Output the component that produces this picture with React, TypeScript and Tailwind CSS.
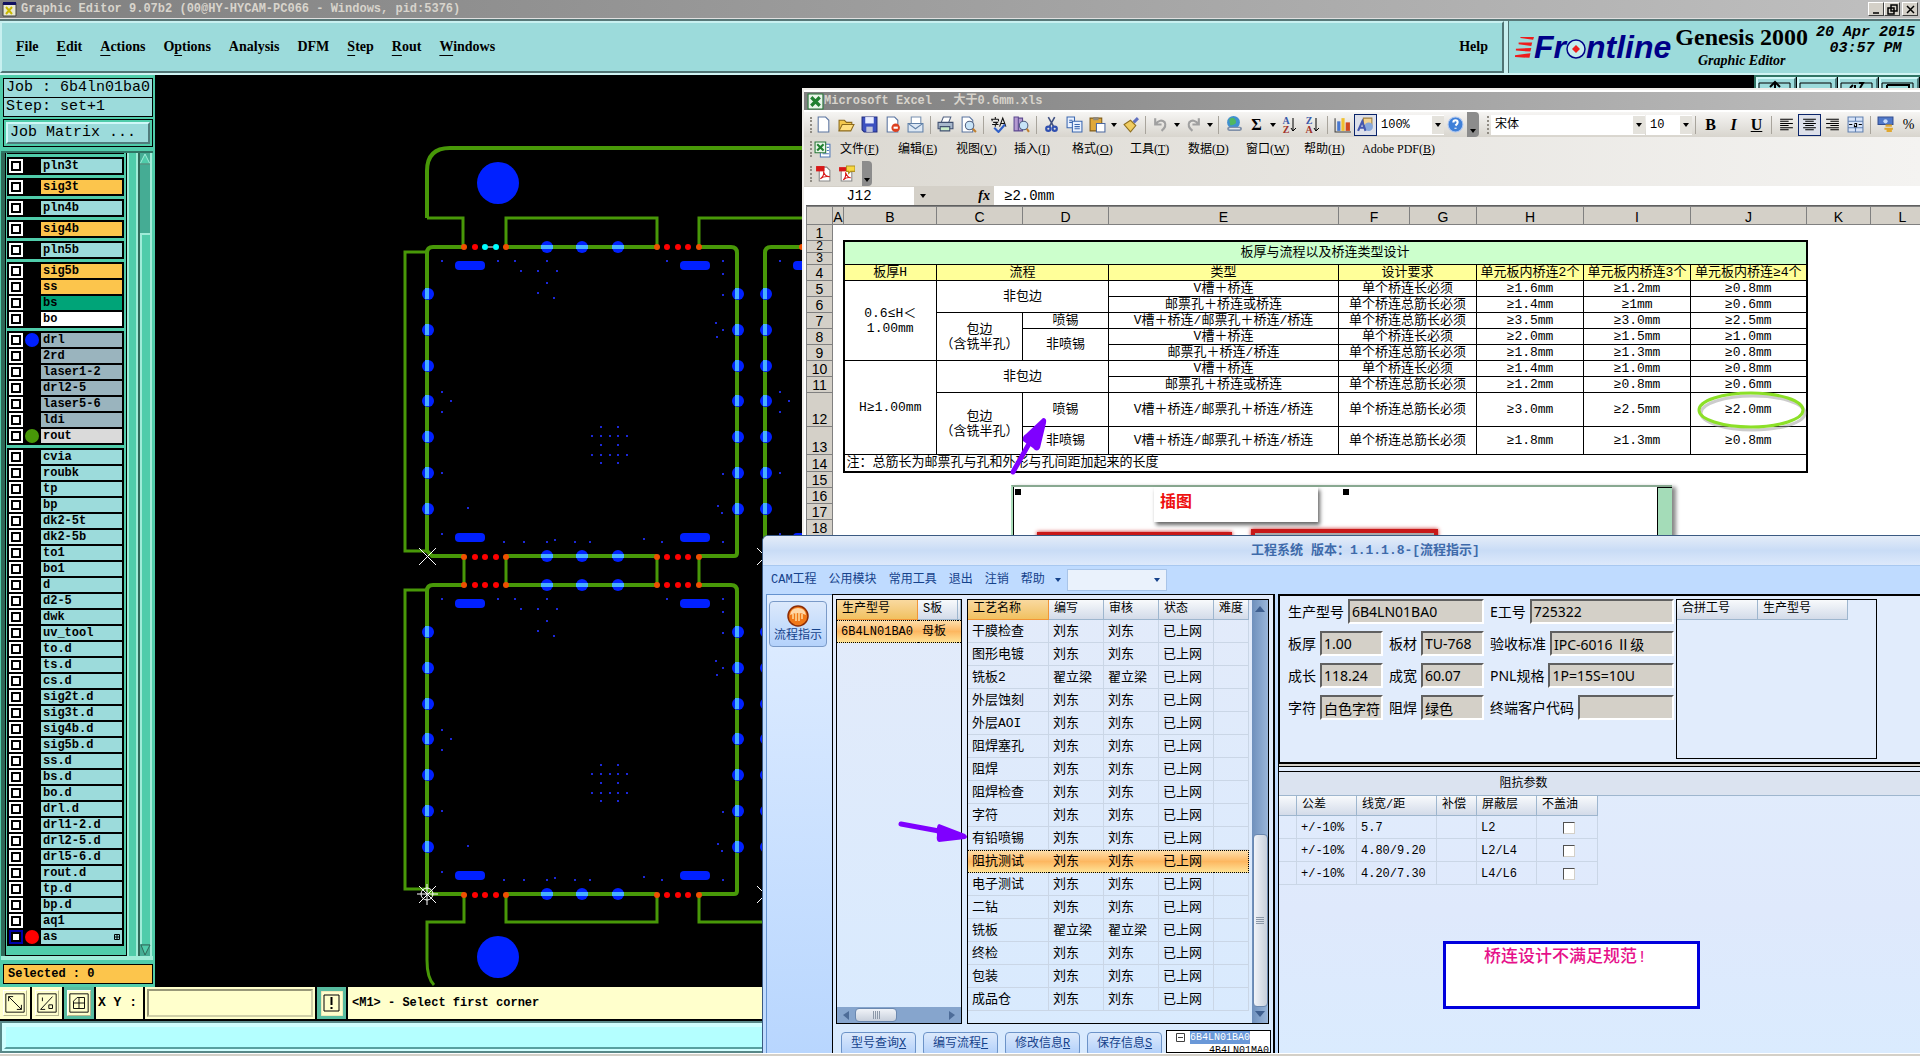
import { Fragment, type ReactNode } from "react";

// ---------- Dados ----------

type Layer = { name: string; bg: string; dot?: string; active?: boolean };

const CYAN = "bg-[#9cdbdb]";
const ORANGE = "bg-[#fcc54c]";
const GRAY = "bg-[#9ab4be]";

const layerGroups: Layer[][] = [
  [{ name: "sig2t", bg: ORANGE }],
  [{ name: "pln3t", bg: CYAN }],
  [{ name: "sig3t", bg: ORANGE }],
  [{ name: "pln4b", bg: CYAN }],
  [{ name: "sig4b", bg: ORANGE }],
  [{ name: "pln5b", bg: CYAN }],
  [
    { name: "sig5b", bg: ORANGE },
    { name: "ss", bg: ORANGE },
    { name: "bs", bg: "bg-[#00a478]" },
    { name: "bo", bg: "bg-white" },
  ],
  [
    { name: "drl", bg: GRAY, dot: "bg-[#0020ff]" },
    { name: "2rd", bg: GRAY },
    { name: "laser1-2", bg: GRAY },
    { name: "drl2-5", bg: GRAY },
    { name: "laser5-6", bg: GRAY },
    { name: "ldi", bg: GRAY },
    { name: "rout", bg: "bg-[#dadada]", dot: "bg-[#489808]" },
  ],
  [
    ..."cvia roubk tp bp dk2-5t dk2-5b to1 bo1 d d2-5 dwk uv_tool to.d ts.d cs.d sig2t.d sig3t.d sig4b.d sig5b.d ss.d bs.d bo.d drl.d drl1-2.d drl2-5.d drl5-6.d rout.d tp.d bp.d aq1"
      .split(" ")
      .map((name) => ({ name, bg: CYAN })),
    { name: "as", bg: CYAN, dot: "bg-[#ff0000]", active: true },
  ],
];

const editorMenu: [string, number][] = [
  ["File", 0],
  ["Edit", 0],
  ["Actions", 0],
  ["Options", 1],
  ["Analysis", -1],
  ["DFM", -1],
  ["Step", 0],
  ["Rout", 0],
  ["Windows", 0],
];

const excelMenu = [
  ["文件", "F"],
  ["编辑", "E"],
  ["视图", "V"],
  ["插入", "I"],
  ["格式", "O"],
  ["工具", "T"],
  ["数据", "D"],
  ["窗口", "W"],
  ["帮助", "H"],
];

const processRows: [string, string][] = [
  ["干膜检查", "刘东"],
  ["图形电镀", "刘东"],
  ["铣板2", "翟立梁"],
  ["外层蚀刻", "刘东"],
  ["外层AOI", "刘东"],
  ["阻焊塞孔", "刘东"],
  ["阻焊", "刘东"],
  ["阻焊检查", "刘东"],
  ["字符", "刘东"],
  ["有铅喷锡", "刘东"],
  ["阻抗测试", "刘东"],
  ["电子测试", "刘东"],
  ["二钻", "刘东"],
  ["铣板", "翟立梁"],
  ["终检", "刘东"],
  ["包装", "刘东"],
  ["成品仓", "刘东"],
];

const impedanceRows = [
  ["+/-10%", "5.7", "L2"],
  ["+/-10%", "4.80/9.20", "L2/L4"],
  ["+/-10%", "4.20/7.30", "L4/L6"],
];

// ---------- PCB ----------

const sideY = [294, 330, 366, 401, 437, 473, 509];
const topX = [547, 582, 618];
const redX = [464, 475, 485, 496, 506, 657, 667, 678, 688, 699];
const breakX = [464, 506, 657, 699];
const vias = [
  [442, 261], [498, 261], [515, 261], [547, 261], [521, 271], [538, 271],
  [557, 271], [547, 283], [538, 293], [554, 298], [667, 261], [723, 261],
  [723, 274], [723, 295], [716, 323], [723, 330], [717, 337], [442, 392],
  [451, 401], [442, 412], [601, 427], [618, 427], [592, 436], [601, 436],
  [610, 436], [618, 436], [627, 436], [601, 445], [618, 445], [592, 455],
  [601, 455], [610, 455], [618, 455], [627, 455], [601, 463], [618, 463],
  [442, 473], [723, 474], [468, 508], [718, 506], [722, 513], [442, 534],
  [504, 542], [524, 542], [547, 542], [555, 540], [575, 542], [590, 542],
  [644, 539], [662, 542], [723, 542],
];

const Board = ({ dx = 0, dy = 0, picked = false }) => (
  <g transform={`translate(${dx} ${dy})`}>
    <path
      d="M464 247H433Q427 247 427 253V551L432 556H464M506 247H657M699 247H731Q737 247 737 253V553Q737 556 734 556H699M506 556H657"
      fill="none"
      stroke="#489808"
      strokeWidth="4"
    />
    {sideY.map((y) =>
      [427, 737].map((x) => (
        <Fragment key={x + "-" + y}>
          <circle cx={x + 1} cy={y} r="6" fill="#0020ff" />
          <rect x={x - 2} y={y - 6} width="4" height="11" fill="#48b0ff" />
        </Fragment>
      ))
    )}
    {topX.map((x) =>
      [247, 556].map((y) => (
        <Fragment key={x + "-" + y}>
          <circle cx={x} cy={y} r="6" fill="#0020ff" />
          <rect x={x - 6} y={y - 2} width="12" height="4" fill="#48b0ff" />
        </Fragment>
      ))
    )}
    {redX.map((x) =>
      [247, 557].map((y) => {
        const isPicked = picked && y === 247 && (x === 485 || x === 496);
        const color = isPicked ? "#00ffff" : breakX.includes(x) ? "#f05000" : "#ff0000";
        return <circle key={x + "-" + y} cx={x} cy={y} r="3" fill={color} />;
      })
    )}
    {picked && <path d="M488 247H493" stroke="#fff" />}
    {[455, 680].map((x) =>
      [261, 533].map((y) => (
        <rect key={x + "-" + y} x={x} y={y} width="30" height="9" rx="4" fill="#0020ff" />
      ))
    )}
    {vias.map(([x, y]) => (
      <rect key={x + "-" + y} x={x - 1} y={y - 1} width="2" height="2" fill="#1c28d8" />
    ))}
  </g>
);

const BoardDrawing = () => (
  <svg width="680" height="912" viewBox="155 75 680 912" className="block shrink-0">
    <g fill="none" stroke="#489808">
      <path strokeWidth="4" d="M427 218V171Q427 148 450 148H835" />
      <path strokeWidth="3" d="M427 218H463V247M506 247V218H657V247M699 247V218H835" />
      <path strokeWidth="3" d="M427 252H405V551H427M427 590H405V889H427" />
      <path strokeWidth="3" d="M464 556V585M506 556V585M657 556V585M699 556V585" />
      <path strokeWidth="3" d="M464 894V922H427V960Q427 978 434 985M506 894V922H657V894M699 894V922H835" />
    </g>
    <circle cx="498" cy="183" r="21" fill="#0020ff" />
    <circle cx="498" cy="957" r="21" fill="#0020ff" />
    <Board picked />
    <Board dy={338} />
    <Board dx={338} />
    <Board dx={338} dy={338} />
    <g stroke="#fff" fill="none">
      <path d="M419 548L436 565M436 548L419 565M757 548L774 565M774 548L757 565" />
      <path d="M419 886L436 903M436 886L419 903M427 884V905M417 894H438M757 886L774 903M774 886L757 903" />
      <circle cx="427" cy="894" r="6" />
    </g>
  </svg>
);

// ---------- Graphic Editor ----------

const FrontlineLogo = () => (
  <div className="flex items-center text-[32px] leading-[32px] font-bold italic text-[#000088] font-[family-name:'Liberation_Sans',sans-serif]">
    <svg width="19" height="26" viewBox="0 0 21 26">
      <path d="M6 2H21L20 5L6 3ZM4 8L19 8L18 12L4 10ZM1 15L18 14L17 18L1 17ZM0 22L17 20L16 25L0 24Z" fill="#ee1c1c" />
    </svg>
    <span>Fr</span>
    <svg width="20" height="24" viewBox="0 0 20 24">
      <circle cx="10" cy="14" r="9" fill="#c4ecec" stroke="#000088" strokeWidth="1.500" />
      <path d="M10 10L14 14L10 18L6 14Z" fill="#ee1c1c" />
    </svg>
    <span>ntline</span>
  </div>
);

const winIcons = ["M2 9H8", "M4 1H10V7H4ZM1 4H7V10H1Z", "M2 2L9 9M9 2L2 9"];

const EditorHeader = () => (
  <>
    <div className="flex h-[19px] shrink-0 items-center gap-1 border-b border-[#e0e0e0] bg-linear-to-r from-[#808080] to-[#c0c0c0] pl-0.5">
      <svg width="15" height="16" viewBox="0 0 15 16">
        <path d="M1 2H14V15H1Z" fill="#e8e8d0" stroke="#404040" />
        <path d="M1 1H14V4H1Z" fill="#101060" />
        <path d="M4 6L10 13M10 6L4 13" stroke="#c8b800" strokeWidth="2" />
      </svg>
      <h1 className="grow text-xs font-bold text-[#d8d4cc]">
        Graphic Editor 9.07b2 (00@HY-HYCAM-PC066 - Windows, pid:5376)
      </h1>
      <div className="flex pr-0.5">
        {winIcons.map((d, index) => (
          <button
            key={index}
            aria-label={["Minimize", "Restore", "Close"][index]}
            className="flex h-3.5 w-4 items-center justify-center border border-t-white border-l-white border-r-[#404040] border-b-[#404040] bg-[#d4d0c8] last:ml-0.5"
          >
            <svg width="11" height="11" viewBox="0 0 11 11" fill="none" stroke="#000" strokeWidth="1.5">
              <path d={d} />
            </svg>
          </button>
        ))}
      </div>
    </div>

    <header className="flex h-14 shrink-0 gap-1 border-y-2 border-t-[#587878] border-b-[#d0f4f4] bg-[#c8f0f0] font-[family-name:'Liberation_Serif',serif]">
      <nav className="flex grow items-center gap-[18px] border-2 border-t-[#c8f0f0] border-l-[#c8f0f0] border-r-[#507474] border-b-[#507474] bg-[#9cdbdb] pr-3.5 pl-3.5 text-sm font-bold">
        {editorMenu.map(([label, key]) => (
          <button key={label}>
            {key < 0 ? (
              label
            ) : (
              <>
                {label.slice(0, key)}
                <span className="underline underline-offset-4">{label[key]}</span>
                {label.slice(key + 1)}
              </>
            )}
          </button>
        ))}
        <button className="ml-auto">Help</button>
      </nav>
      <div className="flex w-[412px] items-center gap-1 border-l border-[#507474] bg-[#9cdbdb] pl-1.5">
        <FrontlineLogo />
        <div className="flex flex-col items-center font-bold">
          <p className="text-2xl leading-7 whitespace-nowrap">Genesis 2000</p>
          <p className="text-sm leading-5 italic">Graphic Editor</p>
        </div>
        <p className="self-start pt-1 pl-1 text-center text-[15px] leading-4 font-bold whitespace-nowrap italic font-[family-name:'Liberation_Mono',monospace]">
          20 Apr 2015
          <br />
          03:57 PM
        </p>
      </div>
    </header>
  </>
);

const LayerRow = ({ layer }: { layer: Layer }) => (
  <label className="flex h-3.5 items-center">
    <input
      type="checkbox"
      className={`size-3.5 shrink-0 appearance-none border-2 bg-white shadow-[inset_0_0_0_2px_#000] ${
        layer.active ? "border-[#0000a8]" : "border-white"
      }`}
    />
    <span className={`mx-0.5 size-3.5 shrink-0 rounded-full ${layer.dot ?? ""}`} />
    <span className={`flex h-3.5 grow items-center justify-between pl-0.5 text-xs leading-3.5 font-bold ${layer.bg}`}>
      {layer.name}
      {layer.active && (
        <svg width="6" height="6" viewBox="0 0 6 6" className="mr-0.5" fill="none" stroke="#000">
          <path d="M.5 .5H5.5V5.5H.5ZM3 0V6M0 3H6" />
        </svg>
      )}
    </span>
  </label>
);

const Sidebar = () => (
  <aside className="flex w-[155px] shrink-0 flex-col bg-[#50ccaa] pt-[3px] pr-0.5 pb-[3px] pl-[3px]">
    <p className="h-5 shrink-0 border border-black bg-[#9cdbdb] pl-0.5 text-[15px] leading-[18px] whitespace-nowrap">
      Job : 6b4ln01ba0
    </p>
    <p className="-mt-px h-5 shrink-0 border border-black bg-[#9cdbdb] pl-0.5 text-[15px] leading-[18px]">
      Step: set+1
    </p>
    <div className="mt-0.5 mb-1 h-7 shrink-0 border border-black p-0.5">
      <button className="block h-full w-full border-2 border-t-[#d0f8f8] border-l-[#d0f8f8] border-r-[#507c7c] border-b-[#507c7c] bg-[#9cdbdb] pl-0.5 text-left text-[15px] leading-[18px]">
        Job Matrix ...
      </button>
    </div>
    <div className="-ml-0.5 flex min-h-0 grow border-t-2 border-b-4 border-t-[#307464] border-b-[#a0ecd8]">
      <div className="w-1 bg-[#306858]" />
      <div className="flex w-[122px] flex-col justify-end gap-[3px] overflow-hidden border-x border-b border-black pr-0.5 pb-[9px] pl-px">
        {layerGroups.map((group, index) => (
          <div key={index} className="flex shrink-0 flex-col gap-0.5 bg-black p-0.5">
            {group.map((layer) => (
              <LayerRow key={layer.name} layer={layer} />
            ))}
          </div>
        ))}
      </div>
      <div className="w-[11px] border-x-2 border-x-[#a0ecd8]" />
      <div className="flex w-[14px] flex-col border-x-2 border-l-[#306858] border-r-[#a0ecd8] bg-[#45ac94]">
        <svg width="11" height="12" viewBox="0 0 11 12" className="shrink-0">
          <path d="M5 1L10 11H0Z" fill="#50ccaa" stroke="#a0ecd8" />
          <path d="M10 11H0" stroke="#306858" />
        </svg>
        <div className="mt-[68px] grow border-t-2 border-l-2 border-[#a0ecd8] bg-[#50ccaa]" />
        <svg width="11" height="12" viewBox="0 0 11 12" className="shrink-0">
          <path d="M1 1H10L5 11Z" fill="#50ccaa" stroke="#306858" />
        </svg>
      </div>
    </div>
    <p className="mt-1 h-5 shrink-0 border border-black bg-[#fcc54c] pl-1 text-xs leading-[18px] font-bold">
      Selected : 0
    </p>
  </aside>
);

const viewTools = [
  "M12 7L17 2L22 7M17 2V12",
  "",
  "M10 8L13 5M15 9V5M19 3L23 3L20 8",
  "M6 5H28V12M6 5V12",
];

const modeIcons = [
  { label: "Snap", d: "M3 3L17 17M3 8V3H8M17 12V17H12" },
  { label: "Angle", d: "M3 17L16 3M3 17H8M5 4V8M12 12H16V16H12Z" },
  { label: "Grid", d: "M4 8L8 4H16V16H4ZM4 10H16M10 4V16" },
];

const EditorFooter = () => (
  <>
    <div className="flex h-[34px] shrink-0 items-stretch border-b-2 border-black bg-[#ffffcc] text-xs font-bold">
      {modeIcons.map((icon, index) => (
        <button
          key={icon.label}
          aria-label={icon.label}
          className={`flex w-8 items-center justify-center border-r-2 border-black ${index === 2 ? "bg-[#58bca0]" : ""}`}
        >
          <svg
            width="24"
            height="26"
            viewBox="-2 -3 24 26"
            fill="none"
            stroke="#000"
            className="border border-t-white border-l-white border-r-[#b8b890] border-b-[#b8b890] bg-[#ffffcc]"
          >
            <path d="M0 0H20V20H0Z" />
            <path d={icon.d} />
          </svg>
        </button>
      ))}
      <label htmlFor="xy" className="flex w-[47px] items-center pl-0.5 text-[13px] whitespace-nowrap">
        X Y :
      </label>
      <div className="flex w-[174px] border-x-2 border-black p-0.5">
        <input id="xy" className="w-full border-2 border-t-[#989878] border-l-[#989878] border-r-[#d0d0a8] border-b-[#d0d0a8] px-1 outline-none" />
      </div>
      <button className="flex w-[31px] items-center justify-center border-r-2 border-black bg-[#58bca0]" aria-label="Alert">
        <svg width="22" height="25" viewBox="0 0 22 25" fill="none" stroke="#000">
          <path d="M0 0H22V25H0Z" fill="#ffffcc" stroke="#ddd8a8" />
          <path d="M3 4H18V20H3Z" />
          <path d="M10.500 6V14M10.500 16V18" strokeWidth="2" />
        </svg>
      </button>
      <p className="self-center pl-1">&lt;M1&gt; - Select first corner</p>
    </div>
    <div className="h-8 shrink-0 border-2 border-[#588888] bg-[#d0ffff] p-0.5">
      <div className="h-full border-2 border-t-[#d0ffff] border-l-[#d0ffff] border-r-[#58a0a0] border-b-[#58a0a0] bg-[#b4ffff]" />
    </div>
    <div className="h-[3px] shrink-0 border-t border-white bg-[#d4d0c8]" />
  </>
);

// ---------- Excel ----------

const icons: Record<string, ReactNode> = {
  new: <path d="M3 1H10L13 4V15H3Z" fill="#fff" stroke="#5a74a0" />,
  open: (
    <>
      <path d="M1 14V4H6L8 6H13V8" fill="#f4c84c" stroke="#8c6a1c" />
      <path d="M1 14L4 8H15L12 14Z" fill="#ffdf80" stroke="#8c6a1c" />
    </>
  ),
  save: (
    <>
      <path d="M1 1H15V15H3L1 13Z" fill="#3c50c0" stroke="#202c80" />
      <path d="M4 1H12V7H4Z" fill="#e8ecff" />
      <path d="M5 10H11V15H5Z" fill="#c0c4d8" />
    </>
  ),
  permission: (
    <>
      <path d="M3 1H10L13 4V15H3Z" fill="#fff" stroke="#5a74a0" />
      <circle cx="11" cy="11" r="4" fill="#dc4020" />
      <path d="M9 11H13" stroke="#fff" strokeWidth="2" />
    </>
  ),
  mail: (
    <>
      <path d="M4 1H13V7H4Z" fill="#fff" stroke="#7890b0" />
      <path d="M1 7H15V15H1Z" fill="#dde8f4" stroke="#6080a8" />
      <path d="M1 7L8 12L15 7" fill="none" stroke="#6080a8" />
    </>
  ),
  print: (
    <>
      <path d="M4 6L6 1H13L11 6" fill="#fff" stroke="#506080" />
      <path d="M1 6H15V12H1Z" fill="#a8b8cc" stroke="#405070" />
      <path d="M3 10H12V14H3Z" fill="#c8ecc8" stroke="#405070" />
    </>
  ),
  preview: (
    <>
      <path d="M2 1H9L12 4V15H2Z" fill="#fff" stroke="#5a74a0" />
      <circle cx="9" cy="9" r="4" fill="#c8e4f8" stroke="#506080" />
      <path d="M12 12L15 15" stroke="#c08030" strokeWidth="2" />
    </>
  ),
  spell: (
    <>
      <path d="M1 3H8M2 3V5M8 3V5M5 1V3M3 6H7L5 8V10M2 8H8M9 10L12 2L15 10M10 7H14" stroke="#111" fill="none" />
      <path d="M4 11L8 15L14 8" stroke="#3060c8" strokeWidth="2" fill="none" />
    </>
  ),
  research: (
    <>
      <path d="M1 1H5V14H1ZM5 2H9V14H5Z" fill="#b49ad0" stroke="#5c4890" />
      <circle cx="10" cy="9" r="4" fill="#c8e4f8" stroke="#506080" />
      <path d="M13 12L15 15" stroke="#c08030" strokeWidth="2" />
    </>
  ),
  cut: (
    <>
      <path d="M5 1L10 10M11 1L6 10" stroke="#405080" fill="none" strokeWidth="1.500" />
      <circle cx="5" cy="12" r="2" fill="none" stroke="#3050b0" strokeWidth="2" />
      <circle cx="11" cy="12" r="2" fill="none" stroke="#3050b0" strokeWidth="2" />
    </>
  ),
  copy: (
    <>
      <path d="M1 1H8V11H1ZM3 4H6M3 6H6" fill="#eaf2ff" stroke="#3c68b0" />
      <path d="M6 5H15V15H6ZM8 8H13M8 10H13M8 12H13" fill="#eaf2ff" stroke="#3c68b0" />
    </>
  ),
  paste: (
    <>
      <path d="M1 2H12V14H1Z" fill="#e0a838" stroke="#805c18" />
      <path d="M4 1H9V4H4Z" fill="#908878" />
      <path d="M7 7H15V15H7Z" fill="#fff" stroke="#4c68a0" />
    </>
  ),
  brush: (
    <>
      <path d="M10 5L14 1L16 3L12 7Z" fill="#6070c0" />
      <path d="M2 8L8 4L13 9L8 15Z" fill="#f0cc60" stroke="#907020" />
    </>
  ),
  undo: <path d="M3 2V8H9M3 8Q8 2 12 6Q14 10 9 14" fill="none" stroke="#a0a0a0" strokeWidth="2" />,
  redo: <path d="M13 2V8H7M13 8Q8 2 4 6Q2 10 7 14" fill="none" stroke="#a0a0a0" strokeWidth="2" />,
  link: (
    <>
      <circle cx="8" cy="6" r="6" fill="#4090d0" />
      <path d="M4 3Q8 0 10 4T5 9Z" fill="#50b860" />
      <path d="M4 12H9M8 12H14" stroke="#8090a8" strokeWidth="4" strokeLinecap="round" />
      <path d="M4 12H14" stroke="#fff" />
    </>
  ),
  chart: (
    <>
      <path d="M1 2V15H16" stroke="#404040" fill="none" />
      <path d="M3 5H6V14H3Z" fill="#4878d0" />
      <path d="M7 2H10V14H7Z" fill="#f0c030" />
      <path d="M11 6H15V14H11Z" fill="#d04820" />
    </>
  ),
  shapes: (
    <>
      <path d="M6 2H14V9H6Z" fill="#f4d490" stroke="#a08040" />
      <circle cx="11" cy="10" r="4" fill="#88a8dc" />
      <path d="M1 14L5 5L8 14M3 11H7" fill="none" stroke="#4458b0" strokeWidth="2" />
    </>
  ),
  help: (
    <>
      <circle cx="8" cy="8" r="7" fill="#4080d8" stroke="#b0c8f0" />
      <path d="M6 6Q6 4 8 4T10 6Q10 7 8 9M8 11V12" stroke="#fff" fill="none" strokeWidth="2" />
    </>
  ),
  left: <path d="M2 3H14M2 5H10M2 7H14M2 9H10M2 11H14M2 13H10" stroke="#000" />,
  center: <path d="M2 3H14M4 5H12M2 7H14M4 9H12M2 11H14M4 13H12" stroke="#000" />,
  right: <path d="M2 3H14M6 5H14M2 7H14M6 9H14M2 11H14M6 13H14" stroke="#000" />,
  merge: (
    <>
      <path d="M1 1H15V15H1ZM1 5H15M1 11H15M8 1V5M8 11V15" fill="#d8e4f8" stroke="#6080b0" />
      <path d="M2 8H5M14 8H11M7 7H9V10H7V8" stroke="#000" fill="none" />
    </>
  ),
  currency: (
    <>
      <path d="M1 1H15V8H1Z" fill="#5078c8" stroke="#304c90" />
      <circle cx="8" cy="5" r="2" fill="#c8dcf8" />
      <path d="M8 9H14M7 12H15M9 14H14" stroke="#e0a830" strokeWidth="2" />
    </>
  ),
  excel: (
    <>
      <path d="M1 1H15V15H1Z" fill="#eaf6ea" stroke="#287838" />
      <path d="M4 4L12 12M12 4L4 12" stroke="#208030" strokeWidth="3" />
    </>
  ),
  workbook: (
    <>
      <path d="M6 3H15V15H6ZM12 6H14M12 9H14M8 12H14" fill="#fff" stroke="#5078b8" />
      <path d="M1 1H11V11H1Z" fill="#eaf6ea" stroke="#287838" />
      <path d="M3 3L9 9M9 3L3 9" stroke="#208030" strokeWidth="2" />
    </>
  ),
  pdf: (
    <>
      <path d="M4 2H11L14 5V15H4Z" fill="#fff" stroke="#888" />
      <path d="M1 1H9V6H1Z" fill="#d81818" />
      <path d="M5 13Q9 10 8 6Q9 11 14 11Q8 10 5 13Z" stroke="#d81818" fill="none" />
    </>
  ),
  pdfMail: (
    <>
      <path d="M3 4H10L13 7V15H3Z" fill="#fff" stroke="#888" />
      <path d="M1 2H8V6H1Z" fill="#d81818" />
      <path d="M5 14Q8 11 7 7Q9 12 12 12Q8 11 5 14Z" stroke="#d81818" fill="none" />
      <path d="M8 1H16V6H12L10 8V6H8Z" fill="#f8d840" stroke="#b09020" />
    </>
  ),
};

const Icon = ({ name }: { name: string }) => (
  <svg width="17" height="17" viewBox="0 0 16 16" className="shrink-0">
    {icons[name]}
  </svg>
);

const Caret = () => (
  <svg width="10" height="4" viewBox="0 0 10 4" className="shrink-0">
    <path d="M2 0H8L5 4Z" fill="currentColor" />
  </svg>
);

const Sep = () => <span className="mx-[3px] h-[18px] w-px shrink-0 bg-[#a8a49c]" />;

const Grip = () => <span className="h-4 w-0.5 shrink-0 border-l-2 border-dotted border-[#908c84]" />;

const Tool = ({ name, label, on = false, children }: { name?: string; label: string; on?: boolean; children?: ReactNode }) => (
  <button
    aria-label={label}
    className={`flex h-[22px] w-[23px] shrink-0 items-center justify-center text-base leading-5 font-bold font-[family-name:'Liberation_Serif',serif] ${
      on ? "border border-[#0a246a] bg-[#dde0ea]" : ""
    }`}
  >
    {name ? <Icon name={name} /> : children}
  </button>
);

const Combo = ({ label, value, width }: { label: string; value: string; width: string }) => (
  <div className={`flex h-5 shrink-0 items-center bg-white ${width}`}>
    <select aria-label={label} className="h-5 min-w-0 grow appearance-none bg-transparent pl-1 text-xs outline-none">
      <option>{value}</option>
    </select>
    <span className="flex h-[18px] w-3 items-center justify-center bg-[#e4e2dc]">
      <Caret />
    </span>
  </div>
);

const SortIcon = ({ a, b }: { a: string; b: string }) => (
  <span className="flex items-center">
    <span className="flex flex-col text-[10px] leading-[9px]">
      <span className="text-[#3858a8]">{a}</span>
      <span className="text-[#a03028]">{b}</span>
    </span>
    <svg width="7" height="14" viewBox="0 0 7 14" fill="none" stroke="#000">
      <path d="M3 0V13M1 10L3 13L6 10" />
    </svg>
  </span>
);

const ExcelToolbars = () => (
  <>
    <div className="mt-0.5 flex h-[25px] items-center bg-linear-to-b from-[#f6f5f3] to-[#d8d5ce] pl-1.5">
      <Grip />
      <Tool name="new" label="新建" />
      <Tool name="open" label="打开" />
      <Tool name="save" label="保存" />
      <Tool name="permission" label="权限" />
      <Tool name="mail" label="邮件" />
      <Sep />
      <Tool name="print" label="打印" />
      <Tool name="preview" label="打印预览" />
      <Sep />
      <Tool name="spell" label="拼写检查" />
      <Tool name="research" label="信息检索" />
      <Sep />
      <Tool name="cut" label="剪切" />
      <Tool name="copy" label="复制" />
      <Tool name="paste" label="粘贴" />
      <Caret />
      <Tool name="brush" label="格式刷" />
      <Sep />
      <Tool name="undo" label="撤消" />
      <Caret />
      <Tool name="redo" label="恢复" />
      <Caret />
      <Sep />
      <Tool name="link" label="超链接" />
      <Tool label="自动求和">Σ</Tool>
      <Caret />
      <Tool label="升序">
        <SortIcon a="A" b="Z" />
      </Tool>
      <Tool label="降序">
        <SortIcon a="Z" b="A" />
      </Tool>
      <Sep />
      <Tool name="chart" label="图表" />
      <Tool name="shapes" label="绘图" on />
      <Combo label="显示比例" value="100%" width="w-[67px]" />
      <Tool name="help" label="帮助" />
      <span className="flex h-[25px] w-3 shrink-0 items-end justify-center rounded-r bg-[#8c8c8c] pb-1">
        <Caret />
      </span>
      <span className="mr-0.5 ml-2">
        <Grip />
      </span>
      <Combo label="字体" value="宋体" width="w-[154px]" />
      <span className="w-0.5" />
      <Combo label="字号" value="10" width="w-[46px]" />
      <Sep />
      <Tool label="加粗">B</Tool>
      <Tool label="倾斜">
        <i>I</i>
      </Tool>
      <Tool label="下划线">
        <u>U</u>
      </Tool>
      <Sep />
      <Tool name="left" label="左对齐" />
      <Tool name="center" label="居中" on />
      <Tool name="right" label="右对齐" />
      <Tool name="merge" label="合并及居中" />
      <Sep />
      <Tool name="currency" label="货币样式" />
      <Tool label="百分比样式">
        <span className="text-sm font-normal">%</span>
      </Tool>
    </div>
    <div className="flex h-6 items-center bg-linear-to-r from-[#dcd9d2] to-[#f4f3f1] pl-1.5 text-xs font-[family-name:'Liberation_Serif','Noto_Sans_CJK_SC',serif]">
      <Grip />
      <span className="w-7 pl-0.5">
        <Icon name="workbook" />
      </span>
      {excelMenu.map(([label, key]) => (
        <button key={label} className="w-[58px] shrink-0 text-left">
          {label}(<u>{key}</u>)
        </button>
      ))}
      <button className="shrink-0">
        Adobe PDF(<u>B</u>)
      </button>
    </div>
    <div className="flex h-[25px] items-center bg-linear-to-r from-[#dcd9d2] to-[#f4f3f1] pl-1.5">
      <Grip />
      <Tool name="pdf" label="转换为 PDF" />
      <Tool name="pdfMail" label="PDF 并审阅" />
      <span className="ml-1 flex h-[25px] w-2.5 items-end justify-center rounded-r bg-[#8c8c8c] pb-1">
        <Caret />
      </span>
    </div>
    <div className="flex h-[19px] items-center bg-[#d4d0c8] text-sm">
      <input aria-label="名称框" defaultValue="J12" className="h-[18px] w-[110px] bg-white text-center outline-none" />
      <span className="w-6 pl-1">
        <Caret />
      </span>
      <span className="w-14 pr-1 text-right text-sm font-bold italic font-[family-name:'Liberation_Serif',serif]">fx</span>
      <input aria-label="编辑栏" defaultValue="≥2.0mm" className="h-[19px] min-w-0 grow bg-white pl-2.5 outline-none" />
    </div>
  </>
);

type Cell = { t: ReactNode; c?: number; r?: number; cls?: string };

const Req = ["单个桥连长必须", "单个桥连总筋长必须"];
const V = "V槽＋桥连";
const MIX = "V槽＋桥连/邮票孔＋桥连/桥连";
const wrapCell = (
  <>
    包边
    <br />
    （含铣半孔）
  </>
);

const tail = (type: string, req: number, ...values: string[]): Cell[] => [
  { t: type },
  { t: Req[req], c: 2 },
  ...values.map((v) => ({ t: "≥" + v + "mm" })),
];

const sheetRows: { n: number; h: string; cells: Cell[] }[] = [
  { n: 2, h: "h-3", cells: [{ t: "板厚与流程以及桥连类型设计", c: 9, r: 2, cls: "bg-[#ccffcc] border-t-2" }] },
  { n: 3, h: "h-3", cells: [] },
  {
    n: 4,
    h: "h-4",
    cells: [
      { t: "板厚H" },
      { t: "流程", c: 2 },
      { t: "类型" },
      { t: "设计要求", c: 2 },
      { t: "单元板内桥连2个" },
      { t: "单元板内桥连3个" },
      { t: "单元板内桥连≥4个" },
    ].map((cell) => ({ ...cell, cls: "bg-[#ffff99]" })),
  },
  {
    n: 5,
    h: "h-4",
    cells: [
      { t: <>0.6≤H＜<br />1.00mm</>, r: 5 },
      { t: "非包边", c: 2, r: 2 },
      ...tail(V, 0, "1.6", "1.2", "0.8"),
    ],
  },
  { n: 6, h: "h-4", cells: tail("邮票孔＋桥连或桥连", 1, "1.4", "1", "0.6") },
  { n: 7, h: "h-4", cells: [{ t: wrapCell, r: 3 }, { t: "喷锡" }, ...tail(MIX, 1, "3.5", "3.0", "2.5")] },
  { n: 8, h: "h-4", cells: [{ t: "非喷锡", r: 2 }, ...tail(V, 0, "2.0", "1.5", "1.0")] },
  { n: 9, h: "h-4", cells: tail("邮票孔＋桥连/桥连", 1, "1.8", "1.3", "0.8") },
  {
    n: 10,
    h: "h-4",
    cells: [{ t: "H≥1.00mm", r: 4 }, { t: "非包边", c: 2, r: 2 }, ...tail(V, 0, "1.4", "1.0", "0.8")],
  },
  { n: 11, h: "h-4", cells: tail("邮票孔＋桥连或桥连", 1, "1.2", "0.8", "0.6") },
  { n: 12, h: "h-[34px]", cells: [{ t: wrapCell, r: 2 }, { t: "喷锡" }, ...tail(MIX, 1, "3.0", "2.5", "2.0")] },
  { n: 13, h: "h-7", cells: [{ t: "非喷锡" }, ...tail(MIX, 1, "1.8", "1.3", "0.8")] },
  {
    n: 14,
    h: "h-[17px]",
    cells: [{ t: "注：总筋长为邮票孔与孔和外形与孔间距加起来的长度", c: 9, cls: "text-left pl-0.5 border-b-2" }],
  },
];

const colWidths = [26, 11, 93, 86, 86, 230, 71, 67, 107, 107, 116, 64, 64];
const rowHead = "border border-[#808080] bg-[#d4d0c8] p-0 text-center align-bottom text-sm leading-3.5 font-normal font-[family-name:'Liberation_Sans',sans-serif]";

const Sheet = () => (
  <div className="relative ml-0.5 border-t border-[#606060] bg-white">
    <table className="w-[1128px] table-fixed border-collapse text-[13px] leading-[15px]">
      <colgroup>
        {colWidths.map((width, index) => (
          <col key={index} style={{ width }} />
        ))}
      </colgroup>
      <thead>
        <tr className="h-[18px]">
          {["", ..."ABCDEFGHIJKL"].map((letter) => (
            <th key={letter} className={rowHead}>
              {letter}
            </th>
          ))}
        </tr>
      </thead>
      <tbody>
        <tr className="h-4">
          <th className={rowHead}>1</th>
        </tr>
        {sheetRows.map((row) => (
          <tr key={row.n} className={row.h}>
            <th className={rowHead}>
              <span className={row.n < 4 ? "block text-xs leading-[11px]" : ""}>{row.n}</span>
            </th>
            {row.n !== 3 && <td className="border-r-2 border-black p-0" rowSpan={row.n === 2 ? 2 : 1} />}
            {row.cells.map((cell, index) => (
              <td
                key={index}
                colSpan={cell.c}
                rowSpan={cell.r}
                className={`border border-black p-0 text-center whitespace-nowrap ${cell.cls ?? ""}`}
              >
                {cell.t}
              </td>
            ))}
            {row.n !== 3 && <td className="border-l-2 border-black p-0" rowSpan={row.n === 2 ? 2 : 1} />}
          </tr>
        ))}
        {[15, 16, 17, 18].map((n) => (
          <tr key={n} className="h-4">
            <th className={rowHead}>{n}</th>
          </tr>
        ))}
      </tbody>
    </table>

    {/* Objetos soltos sobre a planilha */}
    <div className="absolute top-[279px] left-[205px] h-16 w-[661px] border-t-2 border-l-2 border-t-[#88a890] border-l-[#a8dcb8] bg-white shadow-[4px_2px_4px_#888]">
      <div className="absolute top-0 left-0 h-16 w-px bg-black" />
      <div className="absolute top-0.5 left-0.5 size-1.5 bg-black" />
      <div className="absolute top-0.5 left-[330px] size-1.5 bg-black" />
      <div className="absolute top-0 right-0 h-16 w-[15px] border-t border-l border-black bg-[#a4dcb8]" />
      <div className="absolute top-[45px] left-6 h-8 w-[195px] border-4 border-[#c81818] shadow-[0_0_4px_#c81818]" />
      <div className="absolute top-[42px] left-[238px] h-8 w-[187px] border-4 border-[#c81818] bg-[#aaa] shadow-[0_0_4px_#c81818]" />
      <p className="absolute top-0 left-[141px] h-[35px] w-[164px] bg-white pl-1.5 text-base leading-8 font-bold text-[#ee1010] shadow-[2px_3px_4px_#666]">
        插图
      </p>
    </div>
    <svg width="38" height="60" viewBox="0 0 38 60" className="absolute top-[209px] left-[204px]" fill="#7f00ff">
      <path d="M3 57L20 27" stroke="#7f00ff" strokeWidth="5" strokeLinecap="round" />
      <path d="M33 3Q37 3 36 8L30 33Q27 38 23 33L13 26Q12 21 16 19Z" />
    </svg>
    <svg width="116" height="46" viewBox="0 0 116 46" className="absolute top-[181px] left-[887px]">
      <ellipse cx="60" cy="26" rx="52" ry="17" fill="none" stroke="#999" strokeWidth="3" opacity="0.5" />
      <ellipse cx="58" cy="23" rx="52" ry="17" fill="none" stroke="#8ce028" strokeWidth="3" />
    </svg>
  </div>
);

const ExcelWindow = () => (
  <section className="absolute top-[88px] right-0 bottom-0 left-[802px] overflow-hidden border-t-2 border-l-2 border-t-[#f0eeea] border-l-[#f0eeea] bg-white pt-0.5">
    <div className="flex h-[18px] items-center bg-linear-to-r from-[#808080] to-[#c0c0c0] pl-[3px] text-xs font-bold text-[#d8d4cc]">
      <Icon name="excel" />
      <h2 className="whitespace-nowrap">Microsoft Excel - 大于0.6mm.xls</h2>
    </div>
    <ExcelToolbars />
    <Sheet />
  </section>
);

// ---------- 工程系统 ----------

const headCell =
  "h-5 border-r border-b border-[#9eb6ce] bg-linear-to-b from-[#f8fafc] to-[#d3dbe9] p-0 pl-[5px] text-left text-xs leading-[19px] font-normal whitespace-nowrap overflow-hidden";
const headCellHot = "h-5 border-r border-b border-[#f29536] bg-linear-to-b from-[#f9d99f] to-[#f1c15f] p-0 pl-[5px] text-left text-xs leading-[19px] font-normal";
const bodyCell = "h-[23px] border-r border-b border-[#cad6e6] p-0 pt-0.5 pl-1 overflow-hidden whitespace-nowrap";
const hotRow = "bg-linear-to-b from-[#fde0ae] via-[#fdb760] to-[#fee69a]";
const hotCell = "h-[23px] border-y border-dotted border-black p-0 pl-1 overflow-hidden";
const sunken = "min-w-0 h-[25px] border-2 border-t-[#606060] border-l-[#606060] border-r-white border-b-white bg-[#d4d0c8] pl-0.5 outline-none";

const PartList = () => (
  <div className="flex w-[126px] shrink-0 flex-col overflow-hidden border border-black">
    <table className="w-[124px] table-fixed border-separate border-spacing-0 text-xs leading-4">
      <thead>
        <tr>
          <th className={`w-[81px] ${headCellHot}`}>生产型号</th>
          <th className={`w-10 ${headCell}`}>S板</th>
          <th className={headCell} />
        </tr>
      </thead>
      <tbody>
        <tr className={hotRow}>
          <td className={hotCell}>6B4LN01BA0</td>
          <td className={hotCell}>母板</td>
          <td className={hotCell} />
        </tr>
      </tbody>
    </table>
    <div className="mt-auto flex h-4 items-center justify-between bg-[#86a5cd] px-1.5 text-[#4d6c98]">
      <svg width="6" height="9" viewBox="0 0 6 9">
        <path d="M6 0V9L0 4Z" fill="currentColor" />
      </svg>
      <span className="mr-auto ml-1.5 flex h-3.5 w-[42px] items-center justify-center gap-px rounded-sm border border-[#6a88b0] bg-linear-to-b from-[#f0f3f8] to-[#c8d0dc]">
        {[0, 1, 2, 3].map((n) => (
          <i key={n} className="h-2 w-px bg-[#8c98a8]" />
        ))}
      </span>
      <svg width="6" height="9" viewBox="0 0 6 9">
        <path d="M0 0V9L6 4Z" fill="currentColor" />
      </svg>
    </div>
  </div>
);

const ProcessList = () => (
  <div className="flex w-[302px] shrink-0 justify-between overflow-hidden border border-black">
    <table className="w-[281px] table-fixed self-start border-separate border-spacing-0 text-[13px] leading-4">
      <thead>
        <tr>
          <th className={`w-[81px] ${headCellHot}`}>工艺名称</th>
          <th className={`w-[55px] ${headCell}`}>编写</th>
          <th className={`w-[55px] ${headCell}`}>审核</th>
          <th className={`w-[55px] ${headCell}`}>状态</th>
          <th className={headCell}>难度</th>
        </tr>
      </thead>
      <tbody>
        {processRows.map(([name, user], index) => {
          const hot = index === 10;
          const cls = hot ? hotCell : bodyCell;
          return (
            <tr key={index} className={hot ? hotRow : ""}>
              <td className={cls}>{name}</td>
              <td className={cls}>{user}</td>
              <td className={cls}>{user}</td>
              <td className={cls}>已上网</td>
              <td className={hot ? cls + " border-r" : cls} />
            </tr>
          );
        })}
      </tbody>
    </table>
    <div className="flex w-4 flex-col items-center bg-linear-to-r from-[#6f90bc] to-[#9ab6da] py-1.5 text-[#3f5f8f]">
      <svg width="10" height="6" viewBox="0 0 10 6">
        <path d="M0 6H10L5 0Z" fill="currentColor" />
      </svg>
      <span className="mt-auto mb-1 flex h-[173px] w-[15px] flex-col items-center justify-center gap-px rounded-sm border border-[#6a88b0] bg-linear-to-r from-[#f0f3f8] to-[#c8d0dc]">
        {[0, 1, 2, 3].map((n) => (
          <i key={n} className="h-px w-2 bg-[#8c98a8]" />
        ))}
      </span>
      <svg width="10" height="6" viewBox="0 0 10 6">
        <path d="M0 0H10L5 6Z" fill="currentColor" />
      </svg>
    </div>
  </div>
);

const Field = ({ id, label, value, grow = "grow" }: { id: string; label: string; value: string; grow?: string }) => (
  <div className={`flex min-w-0 items-center gap-1 ${grow}`}>
    <label htmlFor={id} className="shrink-0 whitespace-nowrap">
      {label}
    </label>
    <input id={id} defaultValue={value} className={`w-0 grow ${sunken}`} />
  </div>
);

const PartForm = () => (
  <form className="flex w-[386px] shrink-0 flex-col gap-[7px] text-sm leading-5 font-[family-name:'Noto_Sans','Noto_Sans_CJK_SC',sans-serif]">
    <div className="flex gap-1.5">
      <Field id="part" label="生产型号" value="6B4LN01BA0" grow="w-[196px]" />
      <Field id="eno" label="E工号" value="725322" />
    </div>
    <div className="flex gap-1.5">
      <Field id="thick" label="板厚" value="1.00" grow="w-[95px]" />
      <Field id="material" label="板材" value="TU-768" grow="w-[95px]" />
      <Field id="standard" label="验收标准" value="IPC-6016 Ⅱ级" />
    </div>
    <div className="flex gap-1.5">
      <Field id="length" label="成长" value="118.24" grow="w-[95px]" />
      <Field id="width" label="成宽" value="60.07" grow="w-[95px]" />
      <Field id="panel" label="PNL规格" value="1P=15S=10U" />
    </div>
    <div className="flex gap-1.5">
      <Field id="legend" label="字符" value="白色字符" grow="w-[95px]" />
      <Field id="mask" label="阻焊" value="绿色" grow="w-[95px]" />
      <Field id="customer" label="终端客户代码" value="" />
    </div>
  </form>
);

const ImpedanceTable = () => (
  <table className="w-[319px] table-fixed border-separate border-spacing-0 text-xs leading-4">
    <thead>
      <tr>
        <th className={`w-[18px] ${headCell}`} />
        <th className={`w-[60px] ${headCell}`}>公差</th>
        <th className={`w-20 ${headCell}`}>线宽/距</th>
        <th className={`w-10 ${headCell}`}>补偿</th>
        <th className={`w-[60px] ${headCell}`}>屏蔽层</th>
        <th className={headCell}>不盖油</th>
      </tr>
    </thead>
    <tbody>
      {impedanceRows.map(([tol, width, shield]) => (
        <tr key={width}>
          <td className={bodyCell} />
          <td className={bodyCell}>{tol}</td>
          <td className={bodyCell}>{width}</td>
          <td className={bodyCell} />
          <td className={bodyCell}>{shield}</td>
          <td className={bodyCell}>
            <input
              type="checkbox"
              aria-label={"不盖油 " + shield}
              className="mx-auto block size-3 appearance-none border border-t-[#505050] border-l-[#505050] border-r-[#d4d0c8] border-b-[#d4d0c8] bg-white"
            />
          </td>
        </tr>
      ))}
    </tbody>
  </table>
);

const SystemWindow = () => (
  <section className="absolute top-[535px] right-0 bottom-[3px] left-[762px] flex flex-col overflow-hidden rounded-tl-md border-t border-l border-[#3b5a82] bg-[#bfdbff] text-black">
    <div className="flex h-[30px] shrink-0 items-center justify-center border-b border-[#a8c8f0] bg-linear-to-b from-[#e4ecf8] via-[#c9dcf6] to-[#dde9fb] pl-12 text-[13px] font-bold text-[#3e6aaa]">
      <h2 className="whitespace-nowrap">工程系统 版本：1.1.1.8-[流程指示]</h2>
    </div>
    <nav className="flex h-7 shrink-0 items-center gap-3 pl-2 text-xs text-[#15428b]">
      {["CAM工程", "公用模块", "常用工具", "退出", "注销", "帮助"].map((item) => (
        <button key={item} className="whitespace-nowrap">
          {item}
        </button>
      ))}
      <span className="-ml-1">
        <Caret />
      </span>
      <div className="-ml-2 flex h-[22px] w-[100px] items-center border border-[#a8c4e8] bg-[#eaf2fc] pr-1">
        <select aria-label="快速查找" className="h-5 min-w-0 grow appearance-none outline-none">
          <option />
        </select>
        <Caret />
      </div>
    </nav>

    <div className="flex min-h-0 grow">
      <aside className="ml-[3px] w-[66px] shrink-0 border-t border-l border-[#6593cf] bg-linear-to-b from-[#e0edff] to-[#b8d6fe] px-0.5 pt-1.5">
        <button className="flex h-[46px] w-[58px] flex-col items-center justify-center gap-px rounded-sm border border-[#7a9ac8] bg-linear-to-b from-[#dce9fb] to-[#b4d2fb] text-xs text-[#15428b]">
          <svg width="22" height="22" viewBox="0 0 22 22">
            <circle cx="11" cy="11" r="10" fill="#f07818" stroke="#8c2c04" strokeWidth="1.500" />
            <path d="M3 10Q4 3 11 3T19 10Q11 6 3 10Z" fill="#ffd8a8" />
            <path d="M6 9V14M9 8V16M12 8V16M15 9V14" stroke="#ffdca0" strokeWidth="1.500" />
          </svg>
          流程指示
        </button>
      </aside>

      <main className="flex w-[443px] shrink-0 flex-col border-t border-r-2 border-l border-black bg-linear-to-b from-[#e3ebfa] to-[#d8eafe] pt-1 pl-[3px]">
        <div className="flex h-[425px] shrink-0 gap-[5px]">
          <PartList />
          <ProcessList />
        </div>
        <div className="flex min-h-0 grow overflow-hidden pt-1.5">
          <div className="flex gap-[7px] pt-0.5 pl-[5px] text-xs text-[#15428b]">
            {[
              ["型号查询", "X"],
              ["编写流程", "F"],
              ["修改信息", "R"],
              ["保存信息", "S"],
            ].map(([label, key]) => (
              <button
                key={key}
                className="h-6 w-[75px] rounded-sm border border-[#6c93c8] bg-linear-to-b from-[#dce9fb] to-[#b0cffa] whitespace-nowrap"
              >
                {label}
                <u>{key}</u>
              </button>
            ))}
          </div>
          <div className="ml-1 w-[105px] border border-black bg-white pl-2 text-[10px] leading-[13px]">
            <div className="flex items-center gap-1">
              <svg width="11" height="11" viewBox="0 0 11 11" fill="none" stroke="#404040">
                <path d="M1.500 1.500H9.500V9.500H1.500ZM3 5.500H8" />
              </svg>
              <span className="bg-[#6a98d8] text-white">6B4LN01BA0</span>
            </div>
            <p className="pl-[34px]">4B4LN01MA0</p>
          </div>
        </div>
      </main>

      <div className="ml-[3px] flex grow flex-col border-l border-black bg-[#d4d0c8]">
        <div className="flex h-[170px] shrink-0 border-y-2 border-l border-black bg-[#e1ecfc] pt-[3px] pl-2">
          <PartForm />
          <div className="ml-0.5 h-[160px] w-[201px] shrink-0 border border-black">
            <table className="w-[171px] table-fixed border-separate border-spacing-0">
              <thead>
                <tr>
                  <th className={`w-[81px] ${headCell}`}>合拼工号</th>
                  <th className={headCell}>生产型号</th>
                </tr>
              </thead>
            </table>
          </div>
        </div>
        <div className="mt-0.5 h-1.5 shrink-0 border-y border-black bg-[#e1ecfc]" />
        <div className="relative grow bg-linear-to-b from-[#e1ecfc] via-[#dfe9fc] to-[#daebfe]">
          <p className="h-6 border-b border-[#9eb6ce] bg-[#dbe3f0] pr-[152px] text-center text-xs leading-6">阻抗参数</p>
          <ImpedanceTable />
          <p className="absolute top-[169px] left-[164px] h-[68px] w-[257px] border-[3px] border-[#0000dd] bg-white pt-1 pr-3 text-center text-[17px] leading-5 font-medium text-[#e6108a]">
            <span className="whitespace-nowrap">桥连设计不满足规范!</span>
          </p>
        </div>
      </div>
    </div>
    <svg width="72" height="24" viewBox="0 0 72 24" className="absolute top-[283px] left-[134px]" fill="#7f00ff">
      <path d="M4 5L42 12" stroke="#7f00ff" strokeWidth="5" strokeLinecap="round" />
      <path d="M42 5L68 15Q72 18 68 20L42 23Q39 22 40 16Q39 6 42 5Z" />
    </svg>
  </section>
);

export default function App() {
  return (
    <div className="relative flex min-h-screen w-full flex-col overflow-hidden bg-black text-black font-[family-name:'Liberation_Mono','Noto_Sans_CJK_SC',monospace]">
      <EditorHeader />
      <div className="flex h-0 grow">
        <Sidebar />
        <div className="flex min-w-0 grow items-start justify-between overflow-hidden">
          <BoardDrawing />
          <div className="flex border-t-2 border-l-2 border-[#307464]">
            {viewTools.map((d, index) => (
              <button
                key={index}
                aria-label={["Home view", "Pan", "Zoom", "Fit"][index]}
                className="mr-px h-8 w-10 border-2 border-t-[#d0f8f8] border-l-[#d0f8f8] border-r-[#507c7c] border-b-[#507c7c] bg-[#9cdbdb]"
              >
                <svg width="34" height="26" viewBox="0 0 34 26" fill="none" stroke="#000">
                  <path d="M1 3H32V26H1Z" />
                  <path d={d} strokeWidth="2" />
                </svg>
              </button>
            ))}
          </div>
        </div>
      </div>
      <EditorFooter />
      <ExcelWindow />
      <SystemWindow />
      {/* A borda da área de trabalho aparece sob todas as janelas */}
      <div className="absolute right-0 bottom-0 left-0 h-[3px] border-t border-white bg-[#d4d0c8]" />
    </div>
  );
}
